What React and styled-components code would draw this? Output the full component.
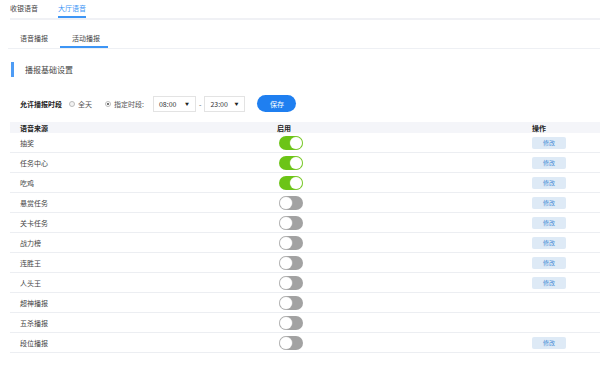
import React from "react";
import styled, { createGlobalStyle } from "styled-components";

const GlobalStyle = createGlobalStyle`
    body {
        margin: 0;
        background: #fff;
        font-family: "Noto Sans CJK SC", "Noto Sans", sans-serif;
        color: #333;
    }
`;

const Page = styled.div`
    width: 600px;
    height: 374px;
    overflow: hidden;
`;

const TopTabs = styled.div`
    display: flex;
    gap: 20px;
    margin-left: 10px;
    border-bottom: 2px solid #f0f1f5;
`;

const TopTab = styled.div`
    font-size: 7px;
    line-height: 16px;
    height: 16px;
    border-bottom: 2px solid ${(p) => (p.$active ? "#3d95f5" : "transparent")};
    color: ${(p) => (p.$active ? "#3d95f5" : "#444")};
`;

const SubTabs = styled.div`
    display: flex;
    margin: 10px 0 0 8px;
    border-bottom: 1px solid #eef0f4;
`;

const SubTab = styled.div`
    font-size: 7px;
    line-height: 16px;
    height: 16px;
    padding: 0 ${(p) => (p.$active ? "8px 0 12px" : "12px")};
    color: #444;
    border-bottom: 2px solid ${(p) => (p.$active ? "#3d95f5" : "transparent")};
`;

const SectionTitle = styled.div`
    margin: 13px 0 0 11px;
    height: 15px;
    line-height: 15px;
    padding-left: 11px;
    border-left: 3px solid #4e9cf5;
    font-size: 8px;
    color: #444;
`;

const FormRow = styled.div`
    display: flex;
    align-items: center;
    height: 17px;
    margin: 18px 0 0 20px;
    font-size: 7px;
`;

const Label = styled.span`
    font-weight: bold;
    color: #222;
    margin-right: 7px;
`;

const Radio = styled.span`
    display: inline-flex;
    align-items: center;
    color: #555;
    margin-right: ${(p) => p.$gap}px;

    &::before {
        content: "";
        width: 4px;
        height: 4px;
        margin-right: 3px;
        border-radius: 50%;
        border: 1px solid #bbb;
        background: ${(p) => (p.$checked ? "radial-gradient(circle, #777 0 1.2px, #fff 1.4px)" : "#f3f3f3")};
    }
`;

const Select = styled.div`
    box-sizing: border-box;
    display: flex;
    align-items: center;
    justify-content: space-between;
    width: ${(p) => p.$w}px;
    height: 16px;
    padding: 0 6px 0 5px;
    border: 1px solid #e3e3e3;
    color: #333;
    font-size: 7px;

    &::after {
        content: "▼";
        font-size: 4px;
        color: #222;
    }
`;

const Dash = styled.span`
    margin: 0 3px;
    color: #555;
`;

const SaveButton = styled.button`
    margin-left: 12px;
    width: 39px;
    height: 17px;
    padding: 0;
    border: none;
    border-radius: 9px;
    background: #1f7ff0;
    color: #fff;
    font-family: inherit;
    font-size: 7px;
`;

const Table = styled.div`
    margin: 10px 0 0 10px;
`;

const Row = styled.div`
    display: grid;
    grid-template-columns: 267px 255px 1fr;
    align-items: center;
    height: ${(p) => (p.$head ? 11 : 19)}px;
    font-size: 7px;
    background: ${(p) => (p.$head ? "#f4f5f9" : "#fff")};
    border-bottom: ${(p) => (p.$head ? "none" : "1px solid #eceef2")};
    color: ${(p) => (p.$head ? "#222" : "#444")};
    font-weight: ${(p) => (p.$head ? "bold" : "normal")};
`;

const Cell = styled.div`
    padding-left: ${(p) => p.$pad || 0}px;
`;

const Toggle = styled.div`
    position: relative;
    margin-left: 2px;
    width: 24px;
    height: 14px;
    border-radius: 7px;
    background: ${(p) => (p.$on ? "#6cc417" : "#a2a2a2")};

    &::after {
        content: "";
        position: absolute;
        top: 1px;
        left: ${(p) => (p.$on ? "11px" : "1px")};
        width: 12px;
        height: 12px;
        border-radius: 50%;
        background: #fff;
        box-shadow: 0 0 0 0.5px ${(p) => (p.$on ? "#8fd14a" : "#c8c8c8")};
    }
`;

const EditButton = styled.div`
    width: 34px;
    height: 12px;
    line-height: 12px;
    border-radius: 2px;
    background: #deeaf6;
    color: #4a8fd6;
    font-size: 6px;
    text-align: center;
`;

const rows = [
    { name: "抽奖", on: true, edit: true },
    { name: "任务中心", on: true, edit: true },
    { name: "吃鸡", on: true, edit: true },
    { name: "悬赏任务", on: false, edit: true },
    { name: "关卡任务", on: false, edit: true },
    { name: "战力榜", on: false, edit: true },
    { name: "连胜王", on: false, edit: true },
    { name: "人头王", on: false, edit: true },
    { name: "超神播报", on: false, edit: false },
    { name: "五杀播报", on: false, edit: false },
    { name: "段位播报", on: false, edit: true },
];

const App = () => {
    return (
        <Page>
            <GlobalStyle />
            <TopTabs>
                <TopTab>收银语音</TopTab>
                <TopTab $active>大厅语音</TopTab>
            </TopTabs>
            <SubTabs>
                <SubTab>语音播报</SubTab>
                <SubTab $active>活动播报</SubTab>
            </SubTabs>
            <SectionTitle>播报基础设置</SectionTitle>
            <FormRow>
                <Label>允许播报时段</Label>
                <Radio $gap={13}>全天</Radio>
                <Radio $checked $gap={9}>指定时段:</Radio>
                <Select $w={43}>08:00</Select>
                <Dash>-</Dash>
                <Select $w={41}>23:00</Select>
                <SaveButton>保存</SaveButton>
            </FormRow>
            <Table>
                <Row $head>
                    <Cell $pad={10}>语音来源</Cell>
                    <Cell>启用</Cell>
                    <Cell>操作</Cell>
                </Row>
                {rows.map((r) => (
                    <Row key={r.name}>
                        <Cell $pad={10}>{r.name}</Cell>
                        <Cell>
                            <Toggle $on={r.on} />
                        </Cell>
                        <Cell>{r.edit && <EditButton>修改</EditButton>}</Cell>
                    </Row>
                ))}
            </Table>
        </Page>
    );
};

export default App;
